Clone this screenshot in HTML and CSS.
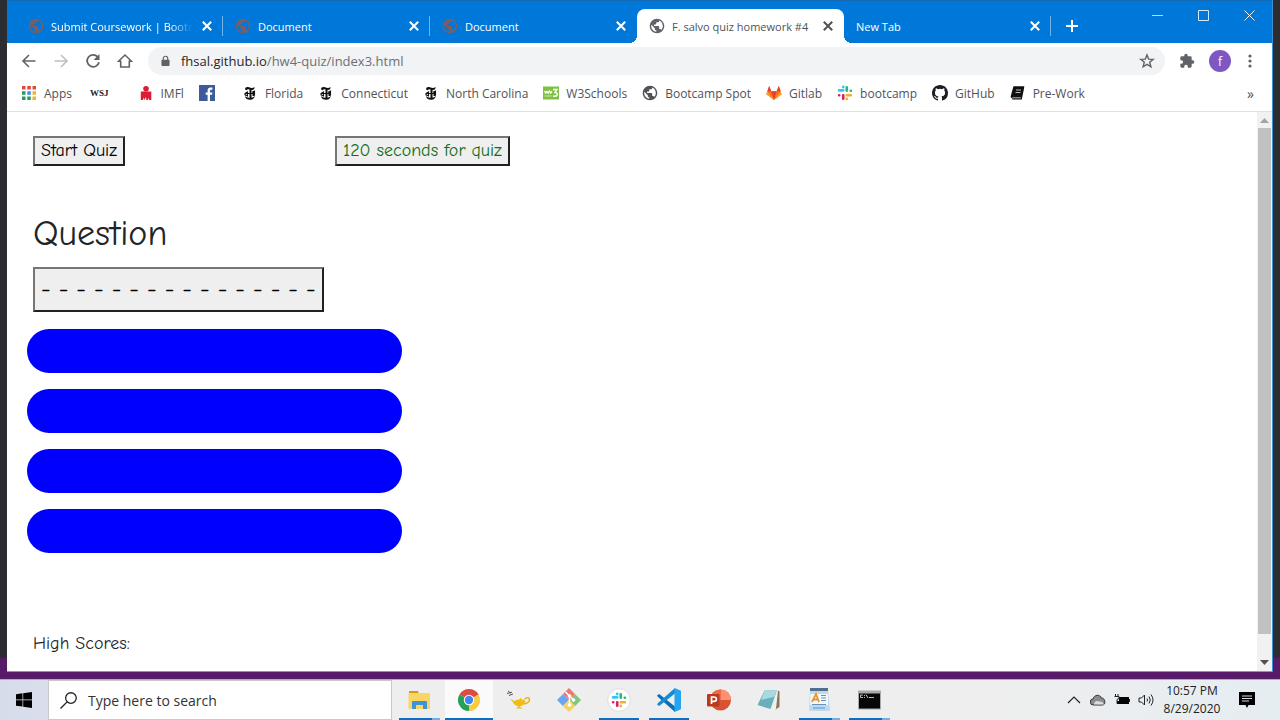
FILE: index.html
```
<!DOCTYPE html>
<html lang="en">
<head>
<meta charset="utf-8">
<title>F. salvo quiz homework #4</title>
<link rel="stylesheet" href="styles.css">
</head>
<body>
<svg class="sprite" aria-hidden="true">
  <symbol id="globe" viewBox="1 1 22 22"><path fill="currentColor" d="M12 2C6.480 2 2 6.480 2 12s4.480 10 10 10 10-4.480 10-10S17.520 2 12 2zm-1 17.930c-3.950-.49-7-3.850-7-7.930 0-.62.08-1.210.21-1.790L9 15v1c0 1.100.9 2 2 2v1.930zm6.900-2.540c-.26-.81-1-1.390-1.900-1.390h-1v-3c0-.55-.45-1-1-1H8v-2h2c.55 0 1-.45 1-1V7h2c1.100 0 2-.9 2-2v-.41c2.930 1.190 5 4.060 5 7.410 0 2.080-.8 3.970-2.100 5.390z"/></symbol>
  <symbol id="close" viewBox="0 0 10 10"><path d="M1.500 1.500l7 7m0-7l-7 7" stroke="currentColor" stroke-width="1.700"/></symbol>
  <symbol id="times" viewBox="0 0 16 16"><path d="M3 4.500C3 2 5 1.500 7 2.300c2 .8 4 1 5.500-.3.300 2-1 3.200-3 3C7.500 4.800 5.500 3.500 4.800 5.300z" fill="#111"/><path d="M8.500 4v9" stroke="#111" stroke-width="2"/><path d="M3 8.500h10M3 8.500l2.500-1.500v4L3 9.800zM10 7.200L12.500 6v4.500" fill="none" stroke="#111" stroke-width="1.100"/><path d="M3 11c.3 3 3 4 5.500 3.800 2.500-.1 4-1.700 4.500-4.300-1 1.500-2.500 2.200-4.300 2.200S4.500 12.500 3 11z" fill="#111"/><path d="M11.500 7v4" stroke="#111" stroke-width="2"/></symbol>
  <symbol id="slack" viewBox="0 0 18 18"><g fill="none" stroke-width="3" stroke-linecap="round"><path d="M7 2.300v-.1M7 6H2.300" stroke="#36c5f0"/><path d="M11 2.500V6.500M15.500 6.500h.1" stroke="#2eb67d"/><path d="M11 11.500h4.500M11 15.700v.1" stroke="#ecb22e"/><path d="M7 11.500v4M2.400 11.500h.1" stroke="#e01e5a"/></g></symbol>
</svg>
<div class="desktop">
  <div class="workspace">
    <div class="window">
      <header class="titlebar">
        <nav class="tabs" aria-label="Tabs">
          <div class="tab"><svg class="icon"><use href="#globe"/></svg><span class="tab-title fade">Submit Coursework | Bootc</span><button class="tab-close" aria-label="Close tab"><svg><use href="#close"/></svg></button></div>
          <div class="tab"><svg class="icon"><use href="#globe"/></svg><span class="tab-title">Document</span><button class="tab-close" aria-label="Close tab"><svg><use href="#close"/></svg></button></div>
          <div class="tab before-active"><svg class="icon"><use href="#globe"/></svg><span class="tab-title">Document</span><button class="tab-close" aria-label="Close tab"><svg><use href="#close"/></svg></button></div>
          <div class="tab active"><svg class="icon"><use href="#globe"/></svg><span class="tab-title">F. salvo quiz homework #4</span><button class="tab-close" aria-label="Close tab"><svg><use href="#close"/></svg></button></div>
          <div class="tab"><span class="tab-title">New Tab</span><button class="tab-close" aria-label="Close tab"><svg><use href="#close"/></svg></button></div>
          <button class="new-tab" aria-label="New tab"><svg viewBox="0 0 12 12"><path d="M6 0v12M0 6h12" stroke="#fff" stroke-width="2"/></svg></button>
        </nav>
        <div class="controls">
          <button aria-label="Minimize"><svg viewBox="0 0 11 11"><path d="M0 5.500h11" stroke="#b9dcf6"/></svg></button>
          <button aria-label="Maximize"><svg viewBox="0 0 11 11"><path d="M.5.5h10v10H.5z" fill="none" stroke="#d3e9f9"/></svg></button>
          <button aria-label="Close"><svg viewBox="0 0 11 11"><path d="M.5.5l10 10m0-10l-10 10" stroke="#fff"/></svg></button>
        </div>
      </header>
      <div class="toolbar">
        <div class="nav-buttons">
          <button aria-label="Back"><svg viewBox="0 0 16 16"><path d="M14.500 8h-12M8 2L2 8l6 6" fill="none" stroke="#5f6368" stroke-width="1.600"/></svg></button>
          <button aria-label="Forward"><svg viewBox="0 0 16 16"><path d="M1.500 8h12M8 2l6 6-6 6" fill="none" stroke="#bdbfc1" stroke-width="1.600"/></svg></button>
          <button aria-label="Reload"><svg viewBox="0 0 16 16"><path d="M12.600 3.800A6 6 0 1 0 14 9.200" fill="none" stroke="#5f6368" stroke-width="1.800"/><path d="M14.500 1v6h-6z" fill="#5f6368"/></svg></button>
          <button aria-label="Home"><svg viewBox="0 0 16 16"><path d="M1.500 8.300L8 2l6.500 6.300h-2.200V14H3.700V8.300z" fill="none" stroke="#5f6368" stroke-width="1.600"/></svg></button>
        </div>
        <div class="omnibox">
          <svg class="lock" viewBox="0 0 10 12"><path d="M2.500 5V3.200a2.500 2.500 0 0 1 5 0V5" fill="none" stroke="#5f6368" stroke-width="1.300"/><rect x=".5" y="4.500" width="9" height="7" rx="1" fill="#5f6368"/></svg>
          <a class="url" href="#"><span class="host">fhsal.github.io</span>/hw4-quiz/index3.html</a>
          <button class="star" aria-label="Bookmark this page"><svg viewBox="0 0 16 16"><path d="M8 1.900l1.700 4.200 4.500.3-3.500 2.900 1.200 4.500L8 11.300l-3.900 2.500 1.200-4.500-3.500-2.900 4.500-.3z" fill="none" stroke="#5f6368" stroke-width="1.400"/></svg></button>
        </div>
        <button class="ext" aria-label="Extensions"><svg viewBox="0 0 24 24"><path fill="#5f6368" d="M20.500 11H19V7a2 2 0 0 0-2-2h-4V3.500a2.500 2.500 0 0 0-5 0V5H4a2 2 0 0 0-2 2v3.800h1.500a2.700 2.700 0 0 1 0 5.400H2V20c0 1.100.9 2 2 2h3.800v-1.500a2.700 2.700 0 0 1 5.400 0V22H17a2 2 0 0 0 2-2v-4h1.500a2.500 2.500 0 0 0 0-5z"/></svg></button>
        <button class="avatar" aria-label="Profile">f</button>
        <button class="more" aria-label="Menu"><svg viewBox="0 0 4 14"><g fill="#5f6368"><circle cx="2" cy="2" r="1.600"/><circle cx="2" cy="7" r="1.600"/><circle cx="2" cy="12" r="1.600"/></g></svg></button>
      </div>
      <nav class="bookmarks" aria-label="Bookmarks">
        <a href="#"><svg class="icon" viewBox="0 0 16 16"><g fill="#df4a3d"><path d="M1 1h3.500v3.500H1zM6.300 1h3.500v3.500H6.300zM11.500 1H15v3.500h-3.500z"/></g><path fill="#279b58" d="M1 6.300h3.500v3.500H1zM1 11.500h3.500V15H1zM6.300 11.500h3.500V15H6.300z"/><path fill="#4586ef" d="M6.300 6.300h3.500v3.500H6.300z"/><path fill="#efb32d" d="M11.500 6.300H15v3.500h-3.500zM11.500 11.500H15V15h-3.500z"/></svg>Apps</a>
        <a class="wsj" href="#">WSJ</a>
        <a href="#"><svg class="icon" viewBox="0 0 16 16"><circle cx="8" cy="3.800" r="2.800" fill="#dc1c37"/><path d="M2.800 6.500h10.500V15h-2.300v-2.500L9.800 15H8.300L8 12l-1.800 3L5 12.500V15H2.800z" fill="#dc1c37"/></svg>IMFl</a>
        <a class="fb" href="#" aria-label="Facebook"><svg class="icon" viewBox="0 0 16 16"><path fill="#3d5a9b" d="M0 0h16v16H0z"/><path fill="#fff" d="M8.600 16V9.800H6.700V7.400h1.900V5.600c0-2 1.200-3 3-3h1.800v2.200h-1.200c-1 0-1.200.5-1.200 1.200v1.400h2.400l-.4 2.400h-2V16z"/></svg></a>
        <a href="#"><svg class="icon"><use href="#times"/></svg>Florida</a>
        <a href="#"><svg class="icon"><use href="#times"/></svg>Connecticut</a>
        <a href="#"><svg class="icon"><use href="#times"/></svg>North Carolina</a>
        <a href="#"><svg class="icon" viewBox="0 0 16 16"><path fill="#7fc241" d="M0 1.500h16v13H0z"/><path d="M1.500 6l1.200 2L4 6.500 5.300 8l1.200-2 1.200 2L9 6.500M10 4.500h4L12 7.500c4 .3 2.500 4.800-2 3.500" fill="none" stroke="#fff" stroke-width="1.400"/><path d="M1.500 11h7" stroke="#cfe9b4"/></svg>W3Schools</a>
        <a href="#"><svg class="icon"><use href="#globe"/></svg>Bootcamp Spot</a>
        <a href="#"><svg class="icon" viewBox="0 0 16 16"><path fill="#fc6d26" d="M8 15L.3 9.300 3.200 1l2.100 5.300h5.400L12.800 1l2.900 8.300z"/><path fill="#e24329" d="M8 15L5.300 6.300h5.400zM3.200 1L1.300 6.300h4zM12.800 1l1.900 5.300h-4z"/><path fill="#fca326" d="M1.300 6.300L.3 9.300 8 15zM14.700 6.300l1 3L8 15z"/></svg>Gitlab</a>
        <a href="#"><svg class="icon"><use href="#slack"/></svg>bootcamp</a>
        <a href="#"><svg class="icon" viewBox="0 0 16 16"><path fill="#1b1f23" d="M8 0C3.580 0 0 3.580 0 8c0 3.540 2.290 6.530 5.470 7.590.4.070.55-.17.55-.38 0-.19-.01-.82-.01-1.490-2.010.37-2.530-.49-2.690-.94-.09-.23-.48-.94-.82-1.130-.28-.15-.68-.52-.01-.53.63-.01 1.080.58 1.230.82.72 1.210 1.870.87 2.330.66.070-.52.28-.87.51-1.070-1.780-.2-3.640-.89-3.640-3.950 0-.87.31-1.590.82-2.150-.08-.2-.36-1.020.08-2.120 0 0 .67-.21 2.200.82a7.600 7.600 0 0 1 4 0c1.530-1.040 2.200-.82 2.200-.82.44 1.100.16 1.920.08 2.120.51.56.82 1.270.82 2.150 0 3.070-1.870 3.750-3.650 3.950.29.25.54.73.54 1.480 0 1.070-.01 1.930-.01 2.200 0 .21.15.46.55.38A8 8 0 0 0 16 8c0-4.420-3.580-8-8-8z"/></svg>GitHub</a>
        <a href="#"><svg class="icon" viewBox="0 0 16 16"><path d="M4 2h9.500L11 12.500H2.500c-1 0-1.300-.7-1-1.500zM13.500 2.500l-2.300 11.200H2.300" fill="#111" stroke="#111" stroke-width="1.400"/><path d="M6 5h5M5.500 7.500h5M2.300 12.800h8.500" stroke="#eee" stroke-width=".8"/></svg>Pre-Work</a>
        <button class="overflow" aria-label="More bookmarks">»</button>
      </nav>
      <div class="viewport">
        <main class="page">
          <div class="top-row"><div class="start-cell"><button class="bevel">Start Quiz</button></div><div><button class="bevel timer">120 seconds for quiz</button></div></div>
          <h1>Question</h1>
          <button class="bevel prompt">- - - - - - - - - - - - - - - -</button>
          <div class="answers"><button aria-label="Answer 1"></button><button aria-label="Answer 2"></button><button aria-label="Answer 3"></button><button aria-label="Answer 4"></button></div>
          <p class="scores">High Scores:</p>
        </main>
        <div class="scrollbar" aria-hidden="true">
          <svg viewBox="0 0 9 5"><path d="M0 5l4.500-5L9 5z" fill="#a3a3a3"/></svg>
          <div class="track"><div class="thumb"></div></div>
          <svg viewBox="0 0 9 5"><path d="M0 0l4.500 5L9 0z" fill="#505050"/></svg>
        </div>
      </div>
    </div>
  </div>
  <footer class="taskbar">
    <button class="start" aria-label="Start"><svg viewBox="0 0 16 16"><path d="M0 2.200l6.500-.9v6.300H0zM7.200 1.200L16 0v7.600H7.200zM0 8.300h6.500v6.300L0 13.800zM7.200 8.300H16V16l-8.800-1.200z"/></svg></button>
    <label class="search"><svg viewBox="0 0 16 16"><circle cx="10.300" cy="5.700" r="5" fill="none" stroke="#222" stroke-width="1.200"/><path d="M6.700 9.300L.5 15.500" stroke="#222" stroke-width="1.300"/></svg><input type="text" placeholder="Type here to search" aria-label="Search"></label>
    <div class="programs">
      <button class="open stacked" aria-label="File Explorer"><svg viewBox="0 0 24 24"><path fill="#d69a16" d="M2 3h9l1 3H2z"/><path fill="#fbd563" d="M1.500 5H22a1 1 0 0 1 1 1v15H1.500z"/><path fill="#3d94d4" d="M5 21v-7a1 1 0 0 1 1-1h13a1 1 0 0 1 1 1v7h-4v-4H9v4z"/></svg></button>
      <button class="open current" aria-label="Chrome"><svg viewBox="0 0 24 24"><path fill="#de4b3f" d="M12 12L2.470 6.500A11 11 0 0 1 21.530 6.500z"/><path fill="#f9cb40" d="M12 12l9.530-5.500A11 11 0 0 1 12 23z"/><path fill="#25a25a" d="M12 12v11A11 11 0 0 1 2.470 6.500z"/><path fill="#de4b3f" d="M12 6.800h9.700l-.2-.3H12z"/><path fill="#f9cb40" d="M16.500 14.600L11.700 23h.5l7-8z"/><circle cx="12" cy="12" r="5.200" fill="#fff"/><circle cx="12" cy="12" r="4.200" fill="#4285f4"/></svg></button>
      <button aria-label="Lamp"><svg viewBox="0 0 24 24"><path d="M1 3l2.500 2M0 5.500l5-1.300M2 7.500l4-1.500" stroke="#555"/><path fill="#f0bd16" d="M2.500 10.500l5 2.500c2-1.500 3-1.500 5-1.500l1-2 1 2c2 0 3 .5 4 2l-3 4-3 1 3 2H9l2.500-2c-3-.5-5-2.500-6-5z"/><path d="M17.500 11.500c2-3 5.500-2 5 .5s-3 3.500-6 4" fill="none" stroke="#e7b21d" stroke-width="1.400"/></svg></button>
      <button aria-label="Git"><svg viewBox="0 0 24 24"><path fill="#ed7774" d="M12 0l6.200 6.200L12 12 5.800 6.200z"/><path fill="#6ca6f3" d="M5.800 6.200L12 12l-6.200 6L0 12z"/><path fill="#80c77c" d="M18.200 6.200L24 12l-5.800 6L12 12z"/><path fill="#f5d263" d="M12 12l6.200 6L12 24l-6.200-6z"/><g fill="#fff" stroke="#fff"><path d="M8.500 4l4 4v9M12.500 8l4 4" fill="none" stroke-width="1.400"/><circle cx="12.500" cy="8" r="1.400"/><circle cx="12.500" cy="17" r="1.400"/><circle cx="16.500" cy="12" r="1.400"/></g></svg></button>
      <button class="open" aria-label="Slack"><svg viewBox="0 0 24 24"><circle cx="12" cy="12" r="11.300" fill="#fff" stroke="#ddd"/><use href="#slack" x="4" y="4" width="16" height="16"/></svg></button>
      <button class="open" aria-label="Visual Studio Code"><svg viewBox="0 0 24 24"><path fill="#0870b8" d="M0 7.500L2.200 6 18 18.500V24L1 9z"/><path fill="#168bd2" d="M0 16.500L2.200 18 18 5.500V0L1 15z"/><path fill="#27a4ef" d="M17.500 0L24 2.800v18.400L17.500 24z"/></svg></button>
      <button aria-label="PowerPoint"><svg viewBox="0 0 24 24"><circle cx="13.500" cy="12" r="10.500" fill="#d95332"/><path fill="#ff9070" d="M13.500 1.500A10.500 10.500 0 0 1 24 12H13.500z"/><path fill="#ed6c47" d="M3 12A10.500 10.500 0 0 1 13.500 1.500V12z"/><rect x="0" y="6" width="12.500" height="12.500" rx="1" fill="#b93a20"/><path d="M4.500 16V9h2.300c3.500 0 3.500 4.300 0 4.300H4.500" fill="none" stroke="#fff" stroke-width="1.700"/></svg></button>
      <button aria-label="Notepad"><svg viewBox="0 0 24 24"><path fill="#8b7652" d="M20 2.500l2.500.8V19l-4 2.500z"/><path fill="#eaf1ee" d="M8 2l13 .5-2 18.500-6 1z"/><path fill="#68aebb" d="M7.500 2.500h12.300L13.500 21 .5 17z"/><path fill="#a7d9de" d="M7.500 2.500h12.300l-2.500 6.300L4 12z"/></svg></button>
      <button class="open stacked" aria-label="WordPad"><svg viewBox="0 0 24 24"><path fill="#bcd9ee" d="M3 2h18l2 21H2z"/><path fill="#f3f8fb" d="M3.500 6h17.300l.4 11H3.200z"/><path fill="#536d8d" d="M3 0h18v3H3z"/><path d="M5 14L9 6l3 8M6.500 11.500h4.500" fill="none" stroke="#eb942f" stroke-width="1.800"/><path d="M14 7.500h5M14 10h5M14 12.500h5M5 16.500h14M6 20h12" stroke="#6592bd"/></svg></button>
      <button class="open stacked" aria-label="Command Prompt"><svg viewBox="0 0 24 24"><path fill="#aaa" d="M1 2.500h23v19H1z"/><path fill="#070707" d="M2 5.500h21v15H2z"/><path d="M6 7H3.500v2.500H6M7.500 7v1M7.500 9v1M9 6.500l2 3.500M12 9.500h5" fill="none" stroke="#bbb"/></svg></button>
    </div>
    <div class="tray">
      <button aria-label="Show hidden icons"><svg viewBox="0 0 16 16"><path d="M2 11l6-6 6 6" fill="none" stroke="#222" stroke-width="1.200"/></svg></button>
      <button aria-label="OneDrive"><svg viewBox="0 0 16 16"><path d="M3.500 13a3 3 0 0 1-.5-6C4 2.500 10 2 11.500 6c4 0 4.500 7 1 7z" fill="#8c8c8c" stroke="#333"/><path d="M4 12.500c0-3 3-4.500 5-3 3-.5 4 1 5 3z" fill="#ddd"/></svg></button>
      <button aria-label="Battery"><svg viewBox="0 0 16 16"><path fill="#050505" d="M5 5h10v7H3V9h2z"/><path d="M15.500 7v3M1.500 2v2.500M4 2v2.500M.5 4.500h4.500v2L3 7.500v4" fill="none" stroke="#222"/></svg></button>
      <button aria-label="Volume"><svg viewBox="0 0 16 16"><path d="M1 6h2.500l3-3v10l-3-3H1zM9 6.500q1 1.500 0 3M11 4.500q2.500 3.500 0 7M13 2.500q4 5.500 0 11" fill="none" stroke="#222"/></svg></button>
    </div>
    <div class="clock"><time>10:57 PM</time><span>8/29/2020</span></div>
    <button class="notice" aria-label="Notifications"><svg viewBox="0 0 16 16"><path d="M0 0h16v13H9.500L8 16l-1.500-3H0z"/><path d="M3 4h10M3 6.500h10M3 9h7" stroke="#ddd"/></svg></button>
  </footer>
</div>
</body>
</html>
```
FILE: styles.css
```
* { box-sizing: border-box; }
body { margin: 0; font-family: "Segoe UI", "Open Sans", sans-serif; font-size: 12px; color: #4f5358; }
button { border: 0; padding: 0; background: none; font: inherit; color: inherit; }
a { color: inherit; text-decoration: none; }
svg { display: block; flex: none; }
.sprite { position: absolute; width: 0; height: 0; }
.icon { width: 16px; height: 16px; }

.desktop { min-height: 100vh; display: flex; flex-direction: column; }
.workspace { flex: 1; display: flex; padding: 0 7px 7px; background: linear-gradient(to top, #581b69 21px, #2c2d31 21px); border-bottom: 1px solid #c99bd0; }
.window { flex: 1; min-width: 0; display: flex; flex-direction: column; background: #fff; border-right: 1px solid #3c91d3; border-bottom: 1px solid #6b9fd8; }

.titlebar { display: flex; justify-content: space-between; height: 43px; background: #0078d9; color: #fff; border-top: 1px solid #1469b4; }
.tabs { display: flex; flex: 1; align-items: flex-end; padding-left: 9px; min-width: 0; font-size: 11px; }
.tab { flex: 0 1 207px; min-width: 0; height: 34px; display: flex; align-items: center; padding: 0 10px 0 12px; }
.tab .icon { margin-right: 7px; color: #765f68; }
.tab-title { flex: 1; overflow: hidden; white-space: nowrap; }
.fade { mask-image: linear-gradient(to right, #000 84%, transparent); }
.tab:not(.active):not(.before-active) { background: linear-gradient(#70b5eb, #70b5eb) right 7px / 1px 20px no-repeat; }
.tab-close { margin-left: 8px; width: 12px; height: 12px; display: grid; place-items: center; }
.tab-close svg { width: 12px; height: 12px; }
.tab.active { background: #fff; color: #4f5358; border-radius: 8px 8px 0 0; position: relative; }
.active .icon { color: #5f6368; }
.active::before, .active::after { content: ""; position: absolute; bottom: 0; width: 8px; height: 8px; }
.active::before { left: -8px; background: radial-gradient(circle at 0 0, transparent 8px, #fff 8px); }
.active::after { right: -8px; background: radial-gradient(circle at 100% 0, transparent 8px, #fff 8px); }
.new-tab { width: 42px; height: 34px; display: grid; place-items: center; }
.new-tab svg { width: 12px; height: 12px; }
.controls { display: flex; height: 29px; }
.controls button { width: 46px; display: grid; place-items: center; }
.controls svg { width: 11px; height: 11px; }

.toolbar { display: flex; align-items: center; height: 36px; padding: 0 16px 0 14px; }
.nav-buttons { display: flex; gap: 16px; width: 127px; }
.toolbar button svg { width: 16px; height: 16px; }
.omnibox { flex: 1; height: 28px; display: flex; align-items: center; background: #f1f3f4; border-radius: 14px; padding: 0 10px 0 13px; }
.lock { width: 9px; height: 12px; margin-right: 11px; }
.url { flex: 1; font-size: 13px; color: #6c7074; }
.host { color: #25272a; }
.ext { margin-left: 14px; }
.avatar { width: 22px; height: 22px; margin: 0 13px 0 14px; border-radius: 50%; background: #7e57c2; color: #fff; }
.toolbar .more svg { width: 4px; height: 14px; }
.toolbar .more { margin: 0 4px; }

.bookmarks { display: flex; align-items: center; height: 33px; padding: 0 14px 4px; gap: 15px; border-bottom: 1px solid #dfe1e4; white-space: nowrap; }
.bookmarks a { display: flex; align-items: center; gap: 7px; }
.bookmarks .wsj { font: bold 9px "Liberation Serif", serif; color: #222; margin: 0 14px 0 3px; }
.bookmarks .fb { margin-right: 12px; }
.overflow { margin-left: auto; padding-right: 4px; font-size: 14px; }

.viewport { flex: 1; display: flex; }
.page { flex: 1; display: flex; flex-direction: column; align-items: flex-start; padding: 24px 26px 12px; font-family: "Comic Sans MS", "Comic Neue", "Noto Sans", sans-serif; font-size: 18px; color: #212529; }
.top-row { display: flex; }
.start-cell { width: 302px; }
.bevel { border: 2px solid; border-color: #767676 #212121 #212121 #767676; background: #efefef; padding: 1px 6px; line-height: 24px; color: #000; white-space: nowrap; }
.timer { color: #126b18; }
.page h1 { margin: 48px 0 13px; font-size: 36px; line-height: 40px; font-weight: 400; }
.prompt { font-size: 24px; line-height: 39px; }
.answers { width: 100%; max-width: 375px; margin: 17px 0 0 -6px; display: grid; gap: 16px; }
.answers button { height: 44px; border-radius: 22px; background: #00f; }
.scores { margin: 78px 0 0; line-height: 26px; }
.scrollbar { width: 15px; padding: 6px 0; display: flex; flex-direction: column; align-items: center; gap: 5px; background: #f1f1f1; }
.scrollbar svg { width: 9px; height: 5px; }
.track { flex: 1; width: 100%; padding: 0 1px; }
.thumb { height: 96%; background: #c1c1c1; }

.taskbar { height: 40px; display: flex; align-items: stretch; background: linear-gradient(to right, #d7dceb, #eee 400px, #eee 1000px, #e5edf2); color: #222; }
.start { width: 48px; display: grid; place-items: center; }
.start svg { width: 16px; height: 16px; }
.search { width: 344px; display: flex; align-items: center; gap: 11px; padding-left: 11px; border: 1px solid #c9c9c9; background: #fff; }
.search svg { width: 17px; height: 17px; }
.search input { flex: 1; min-width: 0; border: 0; padding: 0; background: none; font: inherit; font-size: 14px; }
.search input::placeholder { color: #333; opacity: 1; }
.programs { display: flex; gap: 2px; padding-left: 3px; }
.programs button { width: 48px; display: grid; place-items: center; }
.programs svg { width: 24px; height: 24px; }
.programs .open { background: linear-gradient(#0871c6, #0871c6) center bottom / 40px 2px no-repeat; }
.programs .stacked { background: linear-gradient(to right, #0871c6 33px, #75aee0 33px) center bottom / 41px 2px no-repeat; }
.programs .current { background: linear-gradient(#0871c6, #0871c6) center bottom / 48px 2px no-repeat #fafafa; }
.tray { margin-left: auto; display: flex; gap: 8px; }
.tray svg { width: 16px; height: 16px; }
.clock { width: 76px; display: flex; flex-direction: column; align-items: center; justify-content: center; line-height: 18px; }
.notice { width: 50px; padding-right: 25px; display: grid; justify-items: end; align-items: center; }
.notice svg { width: 16px; height: 16px; }
```
